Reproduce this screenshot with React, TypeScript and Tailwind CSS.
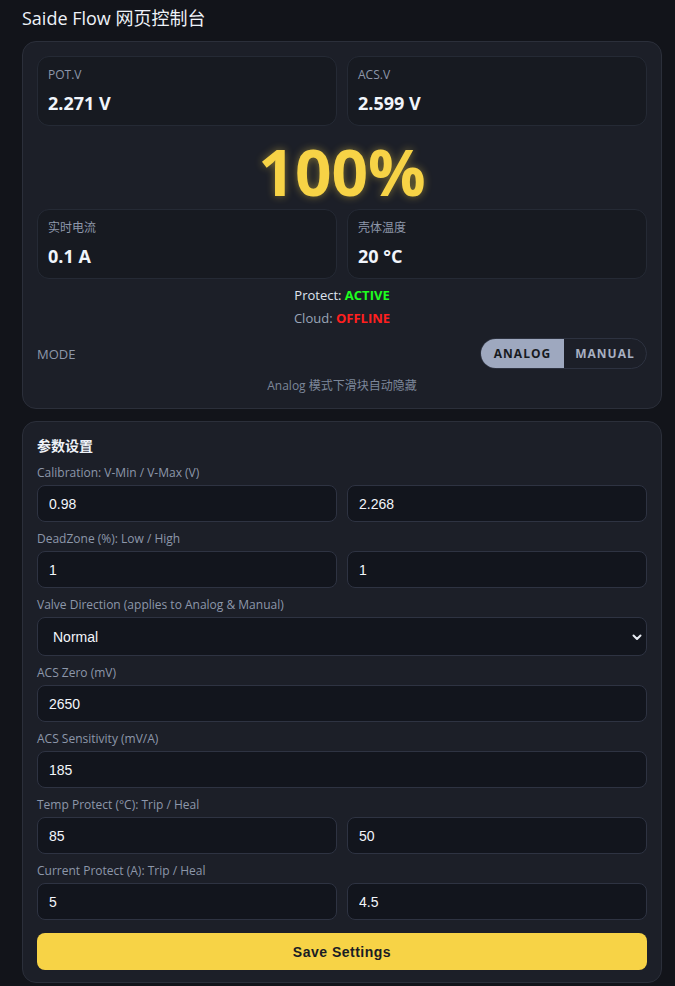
import React, { useState } from "react";

const ui = { fontFamily: '"Open Sans", "Noto Sans CJK SC", sans-serif' };
const arial = { fontFamily: '"Liberation Sans", Arial, sans-serif' };

function Stat({ label, value }: { label: string; value: string }) {
  return (
    <div className="rounded-xl border border-[#252a35] bg-[#171a21] px-[10px] py-[10px]">
      <div className="text-xs leading-4 text-[#8d97aa]">{label}</div>
      <div className="mt-2 text-lg font-bold leading-6 text-[#f1f5fb]">{value}</div>
    </div>
  );
}

function Field({ value }: { value: string }) {
  return (
    <input
      defaultValue={value}
      style={arial}
      className="h-[37px] w-full rounded-lg border border-[#2e3342] bg-[#12151d] px-[11px] text-sm text-[#f3f6fb] outline-none"
    />
  );
}

function Label({ children }: { children: React.ReactNode }) {
  return <div className="mb-1 mt-[9px] text-xs leading-4 text-[#8d97aa]">{children}</div>;
}

export default function App() {
  const [mode, setMode] = useState<"analog" | "manual">("analog");

  return (
    <div style={ui} className="min-h-screen w-full bg-[#12141a] pb-[3px] pl-[22px] pr-[13px] pt-1">
      <div className="mb-[9px] text-lg leading-7 text-[#eef2f8]">Saide Flow 网页控制台</div>

      {/* status card */}
      <div className="rounded-[14px] border border-[#2b2f3a] bg-[#1c1f28] p-[14px]">
        <div className="grid grid-cols-2 gap-[10px]">
          <Stat label="POT.V" value="2.271 V" />
          <Stat label="ACS.V" value="2.599 V" />
        </div>
        <div
          className="my-[10px] h-[63px] text-center text-[64px] font-bold leading-[72px] text-[#f7d346]"
          style={{ textShadow: "0 0 8px rgba(247, 211, 70, 0.45)" }}
        >
          100%
        </div>
        <div className="grid grid-cols-2 gap-[10px]">
          <Stat label="实时电流" value="0.1 A" />
          <Stat label="壳体温度" value="20 °C" />
        </div>
        <div className="mt-[6px] text-center text-[13px] leading-5 text-[#dde3ee]">
          Protect: <span className="font-bold text-[#1eff1e]">ACTIVE</span>
        </div>
        <div className="mt-[3px] text-center text-[13px] leading-5 text-[#9aa5b8]">
          Cloud: <span className="font-bold text-[#ff1f1f]">OFFLINE</span>
        </div>
        <div className="mt-[10px] flex items-center justify-between">
          <span className="pt-[3px] text-[13px] text-[#8d97aa]">MODE</span>
          <div className="flex h-[31px] overflow-hidden rounded-full border border-[#2d3240]">
            <button
              onClick={() => setMode("analog")}
              className={`w-[83px] text-xs font-bold tracking-[1px] ${
                mode === "analog" ? "bg-[#9ea8bf] text-[#171a21]" : "text-[#a8b0c2]"
              }`}
            >
              ANALOG
            </button>
            <button
              onClick={() => setMode("manual")}
              className={`w-[82px] text-xs font-bold tracking-[1px] ${
                mode === "manual" ? "bg-[#9ea8bf] text-[#171a21]" : "text-[#a8b0c2]"
              }`}
            >
              MANUAL
            </button>
          </div>
        </div>
        <div className="mt-[9px] text-center text-xs leading-4 text-[#7d879a]">Analog 模式下滑块自动隐藏</div>
      </div>

      {/* settings card */}
      <div className="mt-[12px] rounded-[14px] border border-[#2b2f3a] bg-[#1c1f28] px-[14px] pb-[12px] pt-[14px]">
        <div className="text-sm font-bold leading-5 text-[#eef2f8]">参数设置</div>

        <Label>Calibration: V-Min / V-Max (V)</Label>
        <div className="grid grid-cols-2 gap-[10px]">
          <Field value="0.98" />
          <Field value="2.268" />
        </div>

        <Label>DeadZone (%): Low / High</Label>
        <div className="grid grid-cols-2 gap-[10px]">
          <Field value="1" />
          <Field value="1" />
        </div>

        <Label>Valve Direction (applies to Analog &amp; Manual)</Label>
        <div className="relative">
          <select
            defaultValue="normal"
            style={arial}
            className="h-[39px] w-full appearance-none rounded-lg border border-[#2e3342] bg-[#12151d] pl-[15px] text-sm text-[#f3f6fb] outline-none"
          >
            <option value="normal">Normal</option>
            <option value="reverse">Reverse</option>
          </select>
          <svg
            className="pointer-events-none absolute right-[5px] top-[15px] h-[10px] w-[10px]"
            viewBox="0 0 10 10"
            fill="none"
            stroke="#e8ecf3"
            strokeWidth="2"
            strokeLinecap="round"
            strokeLinejoin="round"
          >
            <path d="M1.5 3.5 5 7l3.5-3.5" />
          </svg>
        </div>

        <Label>ACS Zero (mV)</Label>
        <Field value="2650" />

        <Label>ACS Sensitivity (mV/A)</Label>
        <Field value="185" />

        <Label>Temp Protect (°C): Trip / Heal</Label>
        <div className="grid grid-cols-2 gap-[10px]">
          <Field value="85" />
          <Field value="50" />
        </div>

        <Label>Current Protect (A): Trip / Heal</Label>
        <div className="grid grid-cols-2 gap-[10px]">
          <Field value="5" />
          <Field value="4.5" />
        </div>

        <button
          style={arial}
          className="mt-[13px] h-[37px] w-full rounded-lg bg-[#f7d346] text-sm font-bold tracking-[0.5px] text-[#1a1d24]"
        >
          Save Settings
        </button>
      </div>
    </div>
  );
}
